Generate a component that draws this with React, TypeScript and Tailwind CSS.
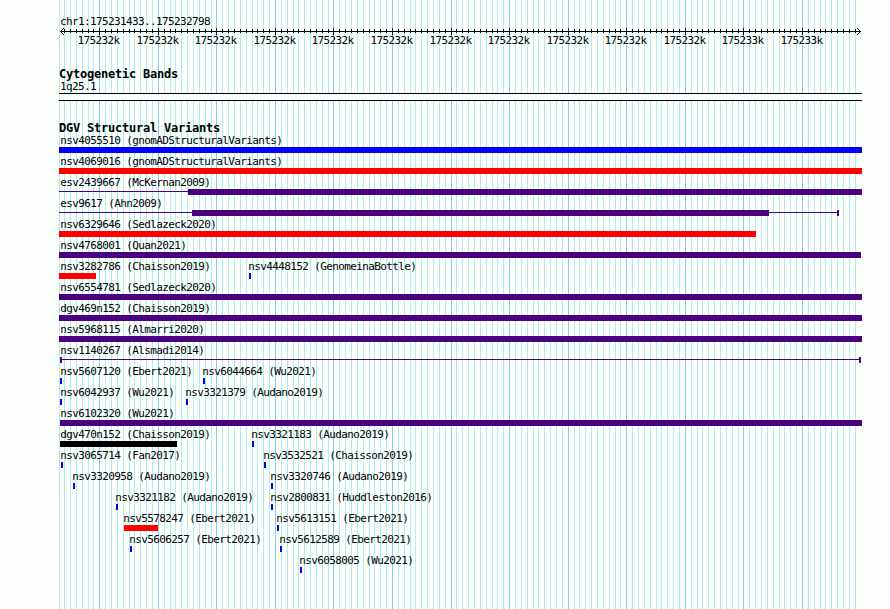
type Segment = { from: number; to: number; color: string; thin?: boolean };
type Feature = { name: string; at: number; parts: Segment[] };

const INDIGO = "#4b0082";
const RED = "#ff0000";
const BLUE = "#0000ff";
const BLACK = "#000000";

const REGION_START = 175231433;
const REGION_END = 175232798;
const SCALE = 800 / (REGION_END - REGION_START + 1);
const toX = (bp: number) => Math.round(60 + (bp - REGION_START) * SCALE);

// Ruler labels round to the nearest thousand, halves going to the even one.
const toKilo = (bp: number) => (bp % 1000 === 500 ? 2 * Math.round(bp / 2000) : Math.round(bp / 1000));

const steps = Array.from({ length: 137 }, (_, i) => 175231430 + i * 10).filter((bp) => bp <= REGION_END);
const ticks = steps.map((bp) => ({ x: Math.max(59, toX(bp)), major: bp % 100 === 0, bp }));
const majors = ticks.filter((t) => t.major);

const bar = (name: string, from: number, to: number, color: string, at = 60): Feature => ({
  name,
  at,
  parts: [{ from, to, color }],
});
const point = (name: string, x: number, at = x - 1): Feature => bar(name, x, x + 2, BLUE, at);

const tracks: Feature[][] = [
  [bar("nsv4055510 (gnomADStructuralVariants)", 59, 862, BLUE)],
  [bar("nsv4069016 (gnomADStructuralVariants)", 59, 862, RED)],
  [
    {
      name: "esv2439667 (McKernan2009)",
      at: 60,
      parts: [
        { from: 59, to: 188, color: INDIGO, thin: true },
        { from: 188, to: 862, color: INDIGO },
      ],
    },
  ],
  [
    {
      name: "esv9617 (Ahn2009)",
      at: 60,
      parts: [
        { from: 59, to: 837, color: INDIGO, thin: true },
        { from: 192, to: 769, color: INDIGO },
        { from: 837, to: 839, color: INDIGO },
      ],
    },
  ],
  [bar("nsv6329646 (Sedlazeck2020)", 59, 756, RED)],
  [bar("nsv4768001 (Quan2021)", 59, 861, INDIGO)],
  [bar("nsv3282786 (Chaisson2019)", 59, 96, RED), point("nsv4448152 (GenomeinaBottle)", 249)],
  [bar("nsv6554781 (Sedlazeck2020)", 59, 862, INDIGO)],
  [bar("dgv469n152 (Chaisson2019)", 59, 862, INDIGO)],
  [bar("nsv5968115 (Almarri2020)", 59, 862, INDIGO)],
  [
    {
      name: "nsv1140267 (Alsmadi2014)",
      at: 60,
      parts: [
        { from: 60, to: 861, color: INDIGO, thin: true },
        { from: 60, to: 62, color: INDIGO },
        { from: 859, to: 861, color: INDIGO },
      ],
    },
  ],
  [point("nsv5607120 (Ebert2021)", 60, 60), point("nsv6044664 (Wu2021)", 203)],
  [point("nsv6042937 (Wu2021)", 60, 60), point("nsv3321379 (Audano2019)", 186)],
  [bar("nsv6102320 (Wu2021)", 60, 862, INDIGO)],
  [bar("dgv470n152 (Chaisson2019)", 60, 177, BLACK), point("nsv3321183 (Audano2019)", 252)],
  [point("nsv3065714 (Fan2017)", 61), point("nsv3532521 (Chaisson2019)", 264)],
  [point("nsv3320958 (Audano2019)", 73), point("nsv3320746 (Audano2019)", 271)],
  [point("nsv3321182 (Audano2019)", 116), point("nsv2800831 (Huddleston2016)", 271)],
  [bar("nsv5578247 (Ebert2021)", 124, 158, RED, 123), point("nsv5613151 (Ebert2021)", 277)],
  [point("nsv5606257 (Ebert2021)", 130), point("nsv5612589 (Ebert2021)", 280)],
  [point("nsv6058005 (Wu2021)", 300)],
];

function Grid() {
  return (
    <svg className="absolute inset-0" width="890" height="609" shapeRendering="crispEdges">
      {ticks.map((t) => (
        <rect key={t.bp} x={t.x} y={0} width={1} height={609} fill={t.major ? "#87ceeb" : "#afeeee"} />
      ))}
    </svg>
  );
}

function Ruler() {
  return (
    <svg className="block" width="890" height="8" shapeRendering="crispEdges">
      <rect x={60} y={3} width={801} height={1} />
      {ticks
        .filter((t) => t.x > 62)
        .map((t) => (
          <rect key={t.bp} x={t.x} y={t.major ? 0 : 1} width={1} height={t.major ? 7 : 4} />
        ))}
      {[1, 2, 3].map((d) => (
        <g key={d}>
          <rect x={60 + d} y={3 - d} width={1} height={1} />
          <rect x={60 + d} y={3 + d} width={1} height={1} />
          <rect x={860 - d} y={3 - d} width={1} height={1} />
          <rect x={860 - d} y={3 + d} width={1} height={1} />
        </g>
      ))}
    </svg>
  );
}

function Track({ features }: { features: Feature[] }) {
  return (
    <div className="relative h-[21px]">
      {features.map((f) => (
        <div key={f.name}>
          <span className="absolute top-px" style={{ left: f.at + 0.3 }}>
            {f.name}
          </span>
          {f.parts.map((p, i) => (
            <i
              key={i}
              className={p.thin ? "absolute top-[15px] h-px" : "absolute top-[13px] h-1.5"}
              style={{ left: p.from, width: p.to - p.from, backgroundColor: p.color }}
            />
          ))}
        </div>
      ))}
    </div>
  );
}

export default function App() {
  return (
    <main className="relative h-[609px] w-[890px] overflow-hidden bg-[#fdfffc] font-['DejaVu_Sans_Mono',monospace] text-[11px] leading-[12px] tracking-[-0.622px] whitespace-pre text-black">
      <Grid />
      <div className="relative pt-4">
        <p className="pl-[60px]">chr1:175231433..175232798</p>
        <Ruler />
        <div className="relative -mt-px h-3">
          {majors.map((t) => (
            <span key={t.bp} className="absolute top-0" style={{ left: t.x - 21.5 }}>
              {toKilo(t.bp)}k
            </span>
          ))}
        </div>

        <section className="pt-[21px]">
          <h2 className="h-3 pl-[59px] text-xs leading-3 font-bold tracking-[-0.224px]">Cytogenetic Bands</h2>
          <p className="pt-px pl-[60px]">1q25.1</p>
          <div className="ml-[59px] h-2 w-[803px] border-y border-black bg-[#fdfffc]" />
        </section>

        <section className="pt-[21px]">
          <h2 className="h-3 pl-[59px] text-xs leading-3 font-bold tracking-[-0.224px]">DGV Structural Variants</h2>
          {tracks.map((features, i) => (
            <Track key={i} features={features} />
          ))}
        </section>
      </div>
    </main>
  );
}
